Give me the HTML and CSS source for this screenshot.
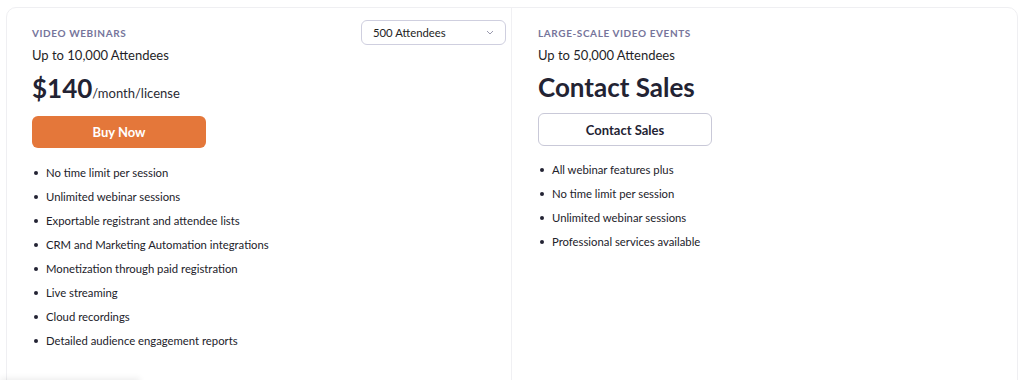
FILE: index.html
```html
<!DOCTYPE html>
<html lang="en">
<head>
  <meta charset="UTF-8">
  <meta name="viewport" content="width=device-width, initial-scale=1">
  <title>Webinar Plans</title>
  <link rel="stylesheet" href="styles.css">
</head>
<body>
  <div class="plans">
    <div class="plan plan-left">
      <div class="plan-head">
        <span class="plan-label">VIDEO WEBINARS</span>
        <div class="select">
          <span>500 Attendees</span>
          <svg width="8" height="5" viewBox="0 0 8 5"><path d="M1 1l3 3 3-3" fill="none" stroke="#9a9aae" stroke-width="1"/></svg>
        </div>
      </div>
      <p class="plan-cap">Up to 10,000 Attendees</p>
      <p class="price"><strong>$140</strong>/month/license</p>
      <button class="btn btn-buy">Buy Now</button>
      <ul class="features">
        <li>No time limit per session</li>
        <li>Unlimited webinar sessions</li>
        <li>Exportable registrant and attendee lists</li>
        <li>CRM and Marketing Automation integrations</li>
        <li>Monetization through paid registration</li>
        <li>Live streaming</li>
        <li>Cloud recordings</li>
        <li>Detailed audience engagement reports</li>
      </ul>
    </div>
    <div class="plan plan-right">
      <div class="plan-head">
        <span class="plan-label">LARGE-SCALE VIDEO EVENTS</span>
      </div>
      <p class="plan-cap">Up to 50,000 Attendees</p>
      <p class="price price-big"><strong>Contact Sales</strong></p>
      <button class="btn btn-outline">Contact Sales</button>
      <ul class="features">
        <li>All webinar features plus</li>
        <li>No time limit per session</li>
        <li>Unlimited webinar sessions</li>
        <li>Professional services available</li>
      </ul>
    </div>
  </div>
  <div class="footer-shade"></div>
</body>
</html>
```

FILE: styles.css
```css
body { margin: 0; background: #fff; font-family: Lato, "Open Sans", sans-serif; color: #232333; overflow: hidden; }
.plans { margin: 7px 6px 0; border: 1px solid #efeff2; border-radius: 10px; display: grid; grid-template-columns: 505px 1fr; height: 420px; }
.plan { padding: 12px 5px 0 25px; }
.plan-left { border-right: 1px solid #f0f0f3; }
.plan-right { padding-left: 26px; }
.plan-head { display: flex; justify-content: space-between; align-items: flex-start; min-height: 25px; }
.plan-label { margin-top: 6px; font-size: 10px; line-height: 14px; font-weight: 700; letter-spacing: 0.6px; color: #76759b; }
.select { width: 145px; height: 25px; box-sizing: border-box; border: 1px solid #cfcfdf; border-radius: 6px; display: flex; align-items: center; justify-content: space-between; padding: 0 11px 0 11px; font-size: 11.3px; color: #222; }
.plan-cap { margin: 0; font-size: 13px; line-height: 20px; color: #1f1f28; }
.price { margin: 6px 0 0; font-size: 13px; line-height: 34px; color: #2a2a33; }
.price strong { font-size: 26px; font-weight: 700; color: #232333; }
.price-big { margin-top: 5px; }
.btn { display: block; width: 174px; height: 32px; border-radius: 6px; font-family: inherit; font-weight: 700; cursor: pointer; }
.btn-buy { margin-top: 6px; background: #e4773a; border: none; color: #fff; font-size: 13px; }
.btn-outline { margin-top: 4px; height: 33px; background: #fff; border: 1px solid #c9c9d8; color: #232333; font-size: 13px; }
.features { list-style: none; margin: 13px 0 0; padding: 0; }
.plan-right .features { margin-top: 12px; }
.features li { position: relative; padding-left: 14px; font-size: 11.3px; line-height: 24px; color: #22222a; }
.features li::before { content: ""; position: absolute; left: 2px; top: 10px; width: 4px; height: 4px; border-radius: 50%; background: #232333; }
.footer-shade { position: fixed; left: 0; bottom: -40px; width: 140px; height: 40px; box-shadow: 0 -2px 6px rgba(0,0,0,0.07); background: #fff; }
```
